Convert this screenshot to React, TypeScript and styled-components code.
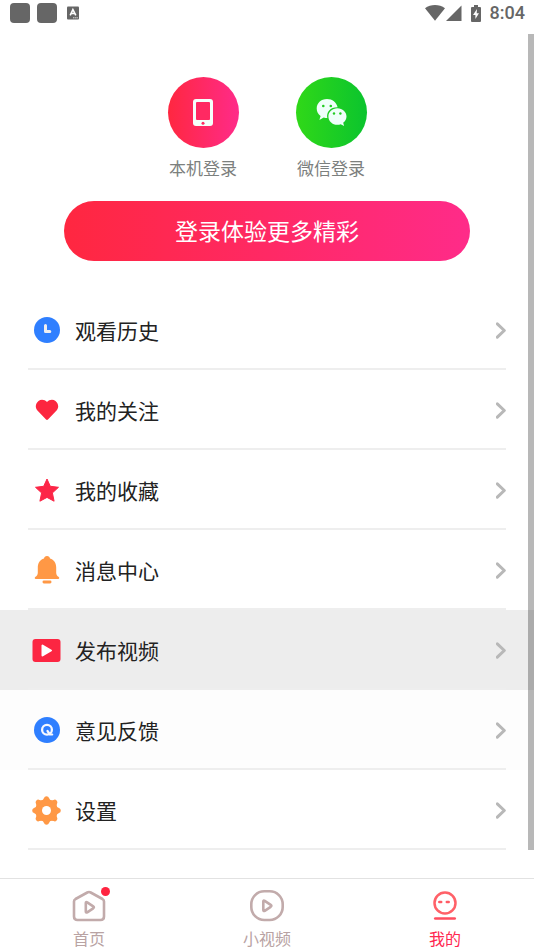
import React from "react";
import styled, { createGlobalStyle, css } from "styled-components";

const GlobalStyle = createGlobalStyle`
  * { box-sizing: border-box; }
  body {
    margin: 0;
    background: #fff;
    font-family: "Noto Sans CJK SC", sans-serif;
  }
  button { font: inherit; border: 0; padding: 0; background: none; cursor: pointer; }
  a { color: inherit; text-decoration: none; }
  svg { display: block; flex: none; }
`;

const Page = styled.div`
  min-height: 100vh;
  display: flex;
  flex-direction: column;
`;

const StatusBar = styled.header`
  height: 34px;
  padding: 0 9px 8px 10px;
  display: flex;
  align-items: center;
  justify-content: space-between;
  color: #666;
`;

const Notices = styled.div`
  display: flex;
  align-items: center;
  gap: 7px;

  svg { margin-left: 2px; }
`;

const NoticeBlock = styled.span`
  width: 20px;
  height: 20px;
  border-radius: 4px;
  background: #666;
`;

const StatusIcons = styled.div`
  display: flex;
  align-items: center;
  gap: 9px;
`;

const Reception = styled.span`
  display: flex;
  gap: 1px;
`;

const Clock = styled.time`
  font: 500 18px/28px Roboto, sans-serif;
`;

const Content = styled.main`
  position: relative;
`;

const ScrollThumb = styled.div`
  position: absolute;
  top: 0;
  right: 0;
  bottom: 0;
  width: 6px;
  background: rgba(0, 0, 0, 0.28);
  pointer-events: none;
`;

const LoginPanel = styled.section`
  padding: 43px 64px 29px;
`;

const LoginMethods = styled.div`
  display: flex;
  justify-content: center;
  gap: 57px;
`;

const LoginMethod = styled.button`
  display: flex;
  flex-direction: column;
  align-items: center;
  gap: 8px;
  color: #7c807e;
  font-size: 17px;
  line-height: 24px;
`;

const MethodDisc = styled.span<{ $from: string; $to: string }>`
  width: 71px;
  height: 71px;
  border-radius: 50%;
  display: flex;
  align-items: center;
  justify-content: center;
  background: linear-gradient(90deg, ${(p) => p.$from}, ${(p) => p.$to});
`;

const LoginButton = styled.button`
  && {
    width: 100%;
    height: 60px;
    margin-top: 21px;
    padding-bottom: 2px;
    border-radius: 30px;
    background: linear-gradient(90deg, #ff2740, #ff2b89);
    color: #fff;
    font-size: 23px;
    line-height: 58px;
  }
`;

const Menu = styled.nav`
  display: flex;
  flex-direction: column;
`;

type Tone = "plain" | "pressed" | "faint";

const MenuRow = styled.a<{ $tone: Tone }>`
  padding: 0 28px;
  ${(p) => p.$tone === "pressed" && css`background: #ededed;`}
  ${(p) => p.$tone === "faint" && css`background: #fdfdfd;`}
`;

const MenuLine = styled.span`
  height: 80px;
  padding-top: 2px;
  display: flex;
  align-items: center;
  border-bottom: 2px solid #eeeeee;
`;

const IconSlot = styled.span`
  width: 37px;
  margin-right: 10px;
  display: flex;
  justify-content: center;
`;

const MenuLabel = styled.span`
  flex: 1;
  color: #222;
  font-size: 21px;
  line-height: 30px;
`;

const TabBar = styled.nav`
  height: 72px;
  margin-top: auto;
  display: grid;
  grid-template-columns: repeat(3, 1fr);
  border-top: 1px solid #e2e2e2;
`;

const Tab = styled.a<{ $active?: boolean }>`
  display: flex;
  flex-direction: column;
  align-items: center;
  gap: 4px;
  padding-top: 9px;
  color: ${(p) => (p.$active ? "#ff2850" : "#b9a3a3")};
  font-size: 16px;
  line-height: 24px;
`;

const TabIcon = styled.span`
  position: relative;
`;

const Dot = styled.span`
  position: absolute;
  top: -1px;
  right: -4px;
  width: 9px;
  height: 9px;
  border-radius: 50%;
  background: #ff2440;
`;

const InputBadge = () => (
  <svg width="14" height="14" viewBox="0 0 14 14">
    <rect x="1" y="0.5" width="12" height="13" rx="1" fill="#666" />
    <path d="M4.2 9.3 6.9 3.5 9.8 9.3M5.2 7.5h3.6" fill="none" stroke="#fff" strokeWidth="1.6" />
    <path d="M7 11.8h5" stroke="#ddd" strokeWidth="1" strokeDasharray="1.5 .6" />
  </svg>
);

const WifiIcon = () => (
  <svg width="20" height="16" viewBox="0 0 20 16">
    <path d="M0 3.3C5.8-1 14.2-1 20 3.3L10 15.8Z" fill="#666" />
  </svg>
);

const SignalIcon = () => (
  <svg width="16" height="16" viewBox="0 0 16 16">
    <path d="M15.500.5v15.500H0Z" fill="#666" />
  </svg>
);

const BatteryIcon = () => (
  <svg width="10" height="17" viewBox="0 0 10 17">
    <path d="M3 0h4v2h2q1 0 1 1v13q0 1-1 1H1q-1 0-1-1V3q0-1 1-1h2Z" fill="#666" />
    <path d="M6 4 2 10h2.400v4L8 8.200H5.700Z" fill="#fff" />
  </svg>
);

const DeviceIcon = () => (
  <svg width="20" height="27" viewBox="0 0 20 27">
    <rect width="20" height="27" rx="3" fill="#f4fffb" />
    <rect x="3" y="3" width="14" height="18" rx="1" fill="#ff2962" />
    <circle cx="10" cy="24.200" r="1.500" fill="#ff2962" />
  </svg>
);

const WechatIcon = () => (
  <svg width="32" height="28" viewBox="-1 1 32 28">
    <g fill="#effffa">
      <path d="M11 1C4.900 1 .7 5.200.7 10.500c0 3.100 1.400 5.800 3.900 7.600l-1.200 3.800 4.300-2.400c1.200.400 2.400.500 3.600.500C10 14 14.500 9 21.600 9.200 20.600 4.400 16.300 1 11 1Z" />
      <path d="M21.400 10.200c-5.200 0-9 3.700-9 8.300s3.800 8.300 9 8.300c1.200 0 2.300-.200 3.300-.600l3.400 1.700-.9-3.100c2.100-1.500 3.300-3.700 3.300-6.300 0-4.600-4-8.300-9.100-8.300Z" />
    </g>
    <g fill="#22cc22">
      <circle cx="7.300" cy="8" r="1.300" />
      <circle cx="14.800" cy="8" r="1.300" />
      <circle cx="18" cy="15.500" r="1.200" />
      <circle cx="24.400" cy="15.500" r="1.200" />
    </g>
  </svg>
);

const Chevron = () => (
  <svg width="10" height="17" viewBox="0 0 10 17">
    <path d="m1.300 1.800 7 6.700-7 6.700" fill="none" stroke="#b8b8b8" strokeWidth="3" strokeLinecap="round" strokeLinejoin="round" />
  </svg>
);

const HistoryIcon = () => (
  <svg width="26" height="26" viewBox="0 0 26 26">
    <circle cx="13" cy="13" r="13" fill="#2f7fff" />
    <path d="M11.500 8.500v6h4.300" fill="none" stroke="#f0eef0" strokeWidth="3" strokeLinecap="round" strokeLinejoin="round" />
  </svg>
);

const HeartIcon = () => (
  <svg width="24" height="22" viewBox="0 0 24 22">
    <path d="M12 3C9.700.4 6 0 3.500 1.900.5 4.200-.1 8.500 2.200 11.300L10.800 20.300q1.200 1.200 2.400 0L21.800 11.300C24.100 8.500 23.500 4.200 20.500 1.900 18 0 14.300.4 12 3Z" fill="#fc263f" />
  </svg>
);

const StarIcon = () => (
  <svg width="26" height="26" viewBox="0 0 26 26">
    <path d="m13 2 3.300 7.300 8.200 1-6.100 5.600 1.700 8.300-7.100-3.800-7.100 3.800 1.700-8.300-6.100-5.600 8.200-1Z" fill="#fc2647" stroke="#fc2647" strokeWidth="1" strokeLinejoin="round" />
  </svg>
);

const BellIcon = () => (
  <svg width="26" height="28" viewBox="0 0 26 28">
    <path d="M13 0c1.700 0 2.800 1 3 2.500 4 1.200 6.200 4.600 6.200 9v5.200c0 2 .9 3 2.600 4.400.9.800.5 2-.6 2H1.800c-1.100 0-1.500-1.200-.6-2 1.700-1.400 2.600-2.400 2.600-4.400v-5.200c0-4.400 2.200-7.800 6.200-9C10.200 1 11.300 0 13 0Z" fill="#ff9845" />
    <rect x="8.500" y="24.600" width="9" height="2.800" rx="1.400" fill="#ff9845" />
  </svg>
);

const VideoIcon = () => (
  <svg width="29" height="23" viewBox="0 0 29 23">
    <rect x=".5" width="28" height="23" rx="3" fill="#fc2642" />
    <path d="M10.500 6.500v10L19 11.500Z" fill="#fff" stroke="#fff" strokeWidth="2" strokeLinejoin="round" />
  </svg>
);

const FeedbackIcon = () => (
  <svg width="26" height="26" viewBox="0 0 26 26">
    <circle cx="13" cy="13" r="13" fill="#2f7fff" />
    <circle cx="13" cy="12.700" r="4.900" fill="none" stroke="#f5f8ff" strokeWidth="2.300" />
    <path d="m13.500 14 2.500 3.500h2.200" fill="none" stroke="#f5f8ff" strokeWidth="2.200" strokeLinecap="round" strokeLinejoin="round" />
  </svg>
);

const GearIcon = () => (
  <svg width="29" height="29" viewBox="-14.500 -14.500 29 29">
    <circle r="11" fill="#ff9845" />
    {[0, 45, 90, 135, 180, 225, 270, 315].map((angle) => (
      <path key={angle} transform={`rotate(${angle})`} d="M-5-9.500Q-3-11-2.500-12.500-2-14.300 0-14.300T2.500-12.500Q3-11 5-9.500Z" fill="#ff9845" />
    ))}
    <circle r="4.500" fill="#fff" />
  </svg>
);

const HomeIcon = () => (
  <svg width="34" height="34" viewBox="0 0 34 34" fill="none" stroke="#c2abab" strokeWidth="2.600" strokeLinejoin="round">
    <path d="M3.500 11 15.300 4.500q1.700-.9 3.400 0L30.500 11q1.500.9 1.500 2.600V28.500q0 3.500-3.500 3.500h-23Q2 32 2 28.500V13.600Q2 11.900 3.500 11Z" />
    <path d="M13.800 15v8.500q0 1.500 1.400.8l6-4q1.400-1 0-2l-6-4q-1.400-.8-1.400.7Z" />
  </svg>
);

const ClipIcon = () => (
  <svg width="36" height="34" viewBox="0 0 36 34" fill="none" stroke="#c2abab" strokeWidth="2.600" strokeLinejoin="round">
    <rect x="2.300" y="3.300" width="31.400" height="28.700" rx="13" />
    <path d="M14.300 13.500v8.500q0 1.500 1.400.8l6-4q1.400-1 0-2l-6-4q-1.400-.8-1.400.7Z" />
  </svg>
);

const ProfileIcon = () => (
  <svg width="26" height="34" viewBox="0 0 26 34" fill="none" strokeLinecap="round">
    <circle cx="13" cy="15" r="10.500" stroke="#ff6168" strokeWidth="2.500" />
    <path d="M7.300 14h1.900M14.800 14h1.900" stroke="#ff5a64" strokeWidth="2.500" />
    <path d="M3.300 30.500h19.400" stroke="#ff4e5f" strokeWidth="2.700" />
  </svg>
);

const menu: { label: string; icon: React.ReactNode; tone?: Tone }[] = [
  { label: "观看历史", icon: <HistoryIcon /> },
  { label: "我的关注", icon: <HeartIcon /> },
  { label: "我的收藏", icon: <StarIcon /> },
  { label: "消息中心", icon: <BellIcon /> },
  { label: "发布视频", icon: <VideoIcon />, tone: "pressed" },
  { label: "意见反馈", icon: <FeedbackIcon />, tone: "faint" },
  { label: "设置", icon: <GearIcon /> },
];

export default function App() {
  return (
    <Page>
      <GlobalStyle />
      <StatusBar>
        <Notices>
          <NoticeBlock />
          <NoticeBlock />
          <InputBadge />
        </Notices>
        <StatusIcons>
          <Reception>
            <WifiIcon />
            <SignalIcon />
          </Reception>
          <BatteryIcon />
          <Clock>8:04</Clock>
        </StatusIcons>
      </StatusBar>
      <Content>
        <LoginPanel>
          <LoginMethods>
            <LoginMethod type="button">
              <MethodDisc $from="#ff2740" $to="#ff2b89"><DeviceIcon /></MethodDisc>
              本机登录
            </LoginMethod>
            <LoginMethod type="button">
              <MethodDisc $from="#30d818" $to="#0bc42e"><WechatIcon /></MethodDisc>
              微信登录
            </LoginMethod>
          </LoginMethods>
          <LoginButton type="button">登录体验更多精彩</LoginButton>
        </LoginPanel>
        <Menu aria-label="我的">
          {menu.map(({ label, icon, tone = "plain" }) => (
            <MenuRow key={label} href="#" $tone={tone}>
              <MenuLine>
                <IconSlot>{icon}</IconSlot>
                <MenuLabel>{label}</MenuLabel>
                <Chevron />
              </MenuLine>
            </MenuRow>
          ))}
        </Menu>
        <ScrollThumb />
      </Content>
      <TabBar>
        <Tab href="#">
          <TabIcon><HomeIcon /><Dot /></TabIcon>
          首页
        </Tab>
        <Tab href="#">
          <TabIcon><ClipIcon /></TabIcon>
          小视频
        </Tab>
        <Tab href="#" $active aria-current="page">
          <TabIcon><ProfileIcon /></TabIcon>
          我的
        </Tab>
      </TabBar>
    </Page>
  );
}
